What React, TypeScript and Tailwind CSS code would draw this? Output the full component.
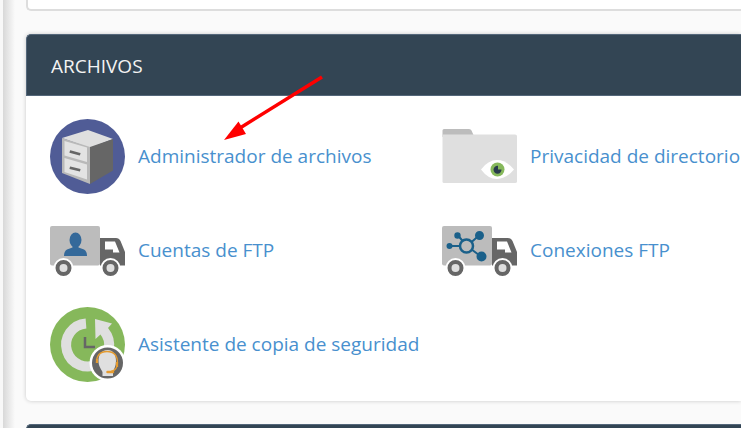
import type { ReactNode } from "react";

const FileManagerIcon = () => (
  <svg viewBox="0 0 75 75" className="size-[75px] shrink-0" aria-hidden="true">
    <circle cx="37.5" cy="37.5" r="37.5" fill="#505c96" />
    <path d="M12 19 38 11 63 20 40 29Z" fill="#dfdfdf" />
    <path d="M12 19 40 28V65L12 54Z" fill="#b9b9b9" />
    <path d="M40 28 63 20V51.500L40 65Z" fill="#666" />
    <path d="M14.500 22 37 28.500V43L14.500 36.500Z" fill="#e3e3e3" />
    <path d="M14.500 39 37 45.500V60.500L14.500 53Z" fill="#e3e3e3" />
    <path d="M21 32.800 29 35M21 49 29 51" stroke="#666" strokeWidth="2.600" strokeLinecap="square" />
  </svg>
);

const FolderIcon = () => (
  <svg viewBox="0 0 75 75" className="size-[75px] shrink-0" aria-hidden="true">
    <path d="M.5 18V11.500Q.5 10 2 10H27Q29 10 29.500 11.500L31.500 16Z" fill="#bcbcbc" />
    <path d="M.5 15.500H73Q75 15.500 75 17V62.500Q75 64 73 64H2Q.5 64 .5 62.500Z" fill="#dfdfdf" />
    <path d="M39 50.500Q46 41 55 41T72 50.500Q64 60 55 60T39 50.500Z" fill="#fff" />
    <circle cx="55.500" cy="50.500" r="7" fill="#86b85b" />
    <path d="M56 46.800A4 4 0 1 0 59.500 50.500L56 50.500Z" fill="#283b4c" />
  </svg>
);

const TruckIcon = ({ children }: { children: ReactNode }) => (
  <svg viewBox="0 0 75 75" className="size-[75px] shrink-0" aria-hidden="true">
    <rect y="13" width="50" height="39.500" rx="2" fill="#bcbcbc" />
    <path d="M50 25H66Q69 25 70.500 28L75 39V52.500H50Z" fill="#666" />
    <path d="M55 28.500H65L69.500 39.500H63V36.500H55Z" fill="#fff" />
    {children}
    <circle cx="13.500" cy="55" r="10" fill="#fff" />
    <circle cx="13.500" cy="55" r="6" fill="#dfdfdf" stroke="#666" strokeWidth="4" />
    <circle cx="60.500" cy="55" r="10" fill="#fff" />
    <circle cx="60.500" cy="55" r="6" fill="#dfdfdf" stroke="#666" strokeWidth="4" />
  </svg>
);

const FtpAccountsIcon = () => (
  <TruckIcon>
    <ellipse cx="25.500" cy="27" rx="6" ry="7.500" fill="#34699a" />
    <path d="M22.500 31H28.500V34.500L34 36.500Q37 38 37 43H14Q14 38 17 36.500L22.500 34.500Z" fill="#34699a" />
  </TruckIcon>
);

const FtpConnectionsIcon = () => (
  <TruckIcon>
    <g fill="#1a608a" stroke="#1a608a" strokeWidth="2">
      <path d="M25 33 37 22.500M25 33 39 43.500M25 33H8M25 33 16 22.500" />
      <circle cx="37.500" cy="22.500" r="3.500" />
      <circle cx="39.500" cy="43.500" r="4" />
      <circle cx="7.500" cy="33" r="2" />
      <circle cx="15.500" cy="22.500" r="2.200" />
      <circle cx="24.500" cy="33" r="6.500" fill="#bcbcbc" strokeWidth="2.500" />
    </g>
  </TruckIcon>
);

const BackupIcon = () => (
  <svg viewBox="0 0 75 75" className="size-[75px] shrink-0" aria-hidden="true">
    <circle cx="37.500" cy="37.500" r="37.500" fill="#86b85b" />
    <path d="M36 16.500A21.500 21.500 0 1 0 54 24" fill="none" stroke="#dfdfdf" strokeWidth="10" />
    <path d="M45 12 62 16.500 58 21 59 25 51 27 45.500 32Z" fill="#dfdfdf" />
    <path d="M35 30V40H45" fill="none" stroke="#666" strokeWidth="2.500" />
    <circle cx="57.500" cy="56" r="18" fill="#fff" />
    <circle cx="57.500" cy="56" r="15.500" fill="#666" />
    <path d="M48.500 54C48.500 47 52 43 57.500 43S66 47 66 54C66 59 64 62 63 65V69H52.500V65C51 62 48.500 59 48.500 54Z" fill="#dfdfdf" />
    <path d="M46.500 56C46.500 49 49 44.500 57 44.500S67.500 49 67.500 56Q67.500 63 61 64.500" fill="none" stroke="#e59b2f" strokeWidth="1.300" />
    <path d="M47 52V56M67 55V60" stroke="#e59b2f" strokeWidth="2.200" />
    <path d="M57.500 65H63" stroke="#e59b2f" strokeWidth="2.500" strokeLinecap="round" />
  </svg>
);

const items = [
  { name: "Administrador de archivos", icon: <FileManagerIcon /> },
  { name: "Privacidad de directorio", icon: <FolderIcon /> },
  { name: "Cuentas de FTP", icon: <FtpAccountsIcon /> },
  { name: "Conexiones FTP", icon: <FtpConnectionsIcon /> },
  { name: "Asistente de copia de seguridad", icon: <BackupIcon /> },
];

const FilesPanel = () => (
  <section className="relative rounded-l-[5px] bg-white shadow-[0_0_4px_rgba(0,0,0,0.2)]">
    <h2 className="rounded-tl-[5px] border border-r-0 border-[#54677a] bg-[#334554] px-6 pt-[17px] pb-[15px] text-[19px] leading-[28px] text-[#f3f3f3]">
      ARCHIVOS
    </h2>
    <ul className="grid grid-cols-[392px_1fr] gap-y-[19px] pt-[23px] pb-[19px] pl-6">
      {items.map((item) => (
        <li key={item.name}>
          <a href="#" className="flex items-center gap-[13px] text-[19px] whitespace-nowrap text-[#4890ce]">
            {item.icon}
            {item.name}
          </a>
        </li>
      ))}
    </ul>
    <svg viewBox="0 0 100 66" className="pointer-events-none absolute top-[41px] left-[198px] w-[100px]" aria-hidden="true">
      <path d="M98 2 16 53" stroke="#f00" strokeWidth="3.500" />
      <path d="M0 65 14.500 46.500 22 59Z" fill="#f00" />
    </svg>
  </section>
);

const App = () => {
  return (
    <div className="flex h-screen overflow-hidden bg-[#fafafa] font-['Open_Sans',sans-serif]">
      <aside className="w-[3px] shrink-0 bg-[#f8f8f8]" />
      <div className="w-3 shrink-0 bg-linear-to-r from-[#d8d8d8] to-[#fafafa]" />
      <main className="min-w-0 grow pl-[11px]">
        <div className="h-[11px] rounded-bl-[5px] border-b-2 border-l-2 border-[#ddd] bg-white" />
        <div className="mt-[23px]">
          <FilesPanel />
        </div>
        <div className="mt-[23px] h-16 rounded-tl-[5px] border-t border-l border-[#54677a] bg-[#334554]" />
      </main>
    </div>
  );
};

export default App;
